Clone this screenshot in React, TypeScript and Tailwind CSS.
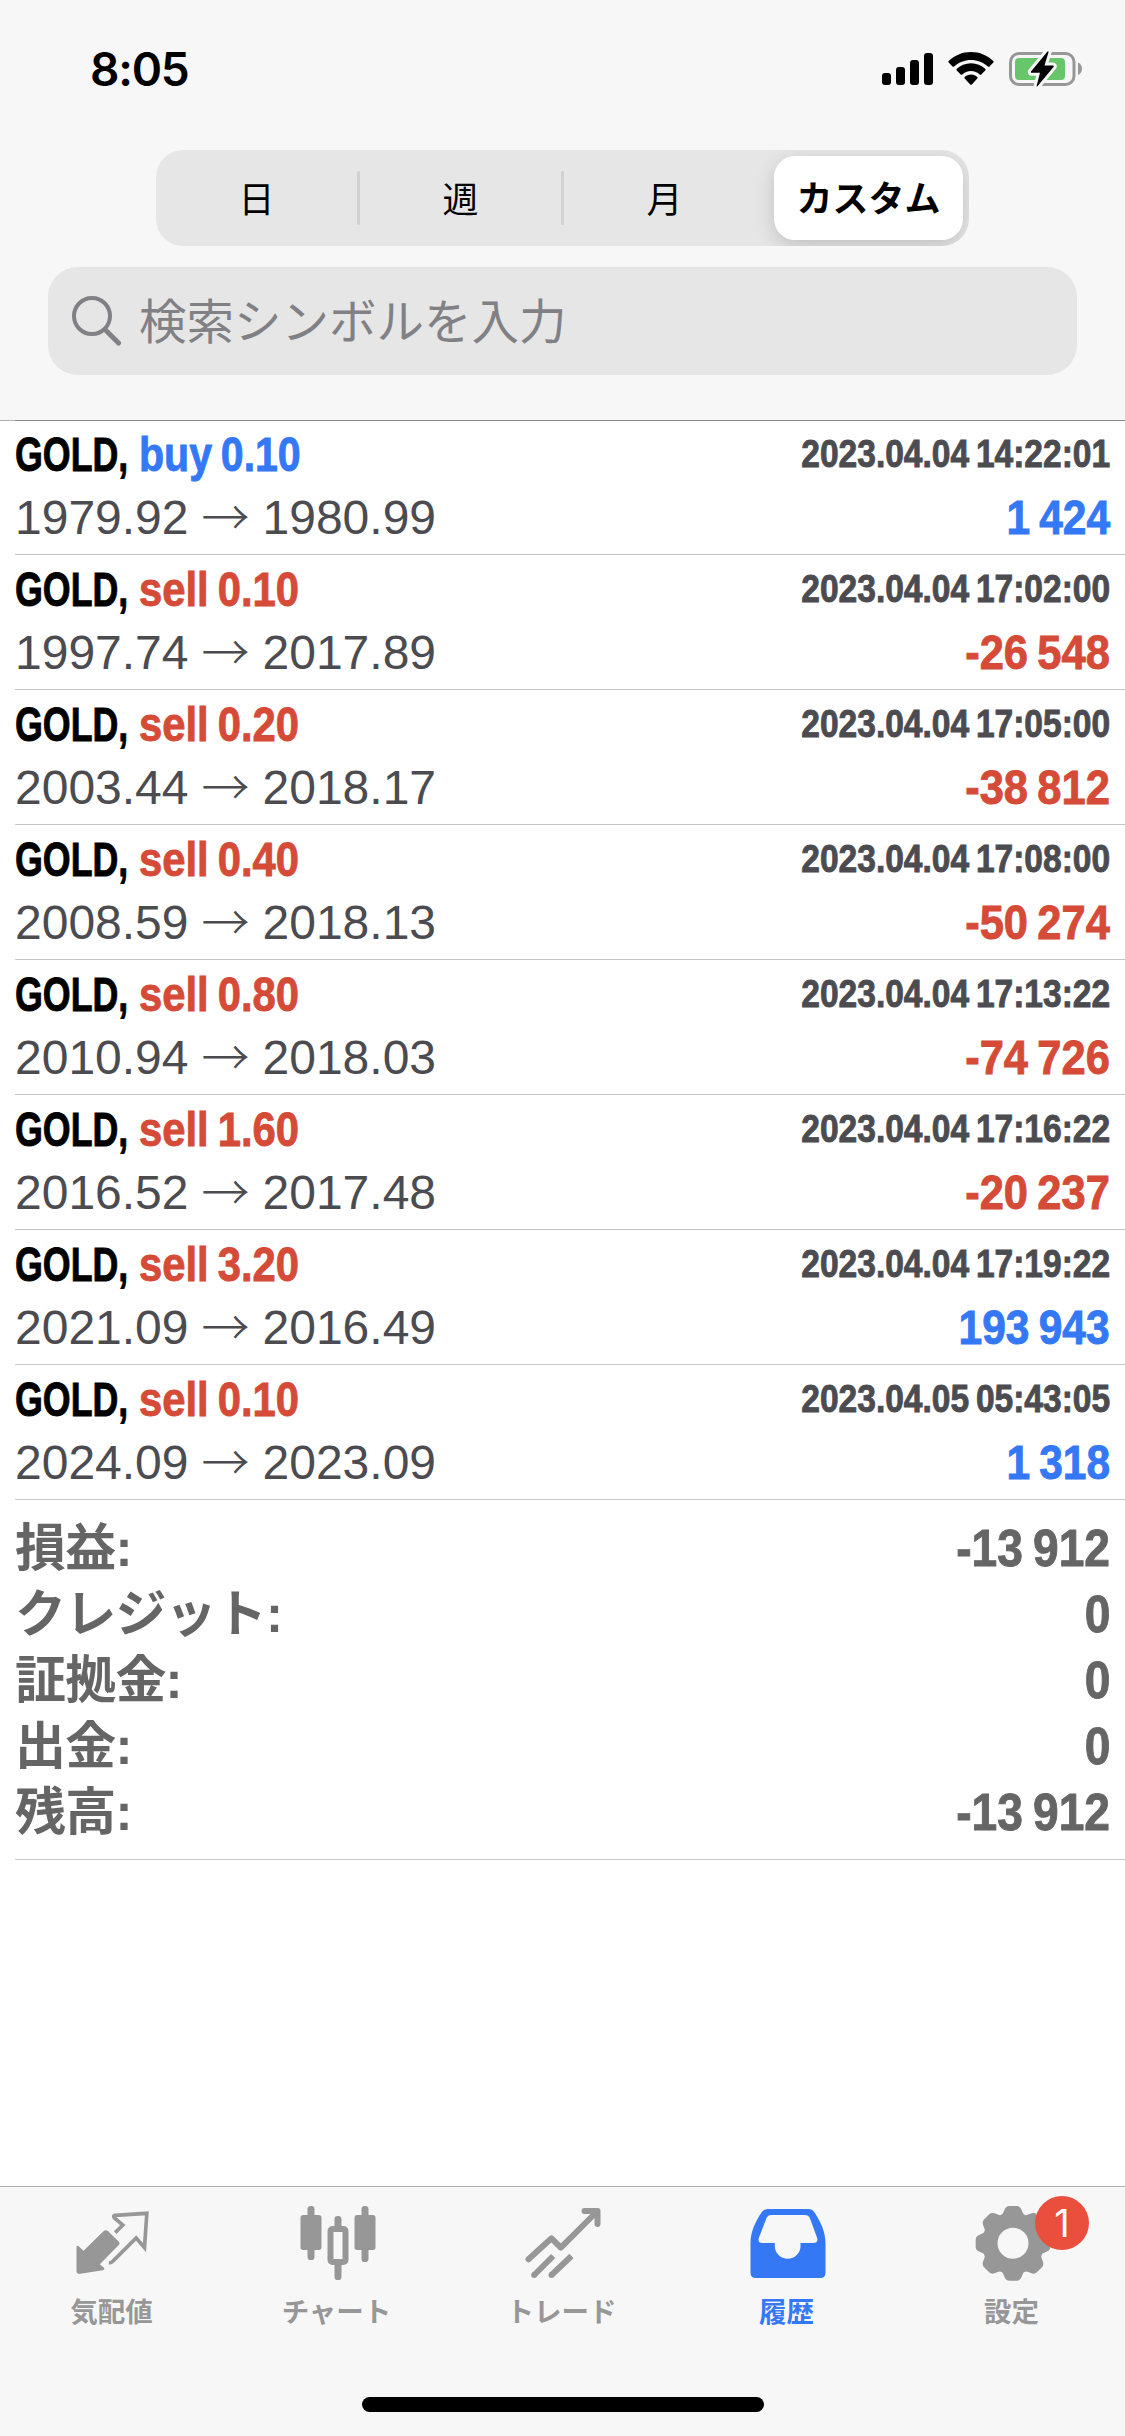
import React from 'react';

interface Deal {
  side: 'buy' | 'sell';
  volume: string;
  open: string;
  close: string;
  time: string;
  profit: string;
}

const DEALS: Deal[] = [
  { side: 'buy', volume: '0.10', open: '1979.92', close: '1980.99', time: '2023.04.04 14:22:01', profit: '1 424' },
  { side: 'sell', volume: '0.10', open: '1997.74', close: '2017.89', time: '2023.04.04 17:02:00', profit: '-26 548' },
  { side: 'sell', volume: '0.20', open: '2003.44', close: '2018.17', time: '2023.04.04 17:05:00', profit: '-38 812' },
  { side: 'sell', volume: '0.40', open: '2008.59', close: '2018.13', time: '2023.04.04 17:08:00', profit: '-50 274' },
  { side: 'sell', volume: '0.80', open: '2010.94', close: '2018.03', time: '2023.04.04 17:13:22', profit: '-74 726' },
  { side: 'sell', volume: '1.60', open: '2016.52', close: '2017.48', time: '2023.04.04 17:16:22', profit: '-20 237' },
  { side: 'sell', volume: '3.20', open: '2021.09', close: '2016.49', time: '2023.04.04 17:19:22', profit: '193 943' },
  { side: 'sell', volume: '0.10', open: '2024.09', close: '2023.09', time: '2023.04.05 05:43:05', profit: '1 318' },
];

const SUMMARY = [
  { label: '損益:', value: '-13 912' },
  { label: 'クレジット:', value: '0' },
  { label: '証拠金:', value: '0' },
  { label: '出金:', value: '0' },
  { label: '残高:', value: '-13 912' },
];

const PERIODS = ['日', '週', '月'];

// Condensed bold: the plain bold squeezed sideways, with a thin stroke to keep the stems heavy
const CONDENSED =
  "font-['Liberation_Sans',sans-serif] font-bold whitespace-pre [word-spacing:-3px] [-webkit-text-stroke:0.9px_currentColor]";

function StatusBar() {
  return (
    <div className="flex h-[150px] items-start justify-between pl-[90px] pr-[42px] text-black">
      <span className="mt-[41px] font-['Inter',sans-serif] text-[46px] leading-[56px] font-semibold tracking-[-1.2px]">
        8:05
      </span>
      <svg className="mt-[50px] h-[38px] w-[201px]" viewBox="882 50 201 38">
        <rect x="882" y="73" width="9" height="12" rx="3" />
        <rect x="896" y="67" width="9" height="18" rx="3" />
        <rect x="910" y="60" width="9" height="25" rx="3" />
        <rect x="924" y="53" width="9" height="32" rx="3" />
        {/* wifi */}
        <path d="M971 52c8.600 0 16.500 3.400 22.300 8.900.5.500.5 1.200 0 1.700l-3.800 3.800c-.5.500-1.200.5-1.700 0-4.500-4.200-10.400-6.500-16.800-6.500s-12.300 2.300-16.800 6.500c-.5.500-1.200.5-1.700 0l-3.800-3.800c-.5-.5-.5-1.200 0-1.700 5.800-5.500 13.700-8.900 22.300-8.900z" />
        <path d="M971 63.200c5.500 0 10.500 2.100 14.200 5.600.5.500.5 1.200 0 1.700l-3.900 3.900c-.4.400-1.100.4-1.600 0-2.300-2.100-5.300-3.400-8.700-3.400s-6.400 1.300-8.700 3.400c-.5.400-1.200.4-1.600 0l-3.900-3.900c-.5-.5-.5-1.200 0-1.700 3.700-3.500 8.700-5.600 14.200-5.600z" />
        <path d="M971 74.600c2.500 0 4.700.9 6.300 2.400.4.400.4 1 0 1.500l-5.500 6c-.4.500-1.200.5-1.600 0l-5.500-6c-.4-.5-.4-1.100 0-1.500 1.600-1.500 3.800-2.400 6.300-2.400z" />
        {/* battery */}
        <rect x="1010.500" y="53.500" width="63.500" height="31" rx="8.500" fill="none" stroke="#979797" strokeWidth="3" />
        <path d="M1078 62.500c2.600 1 4 3.600 4 6.300s-1.400 5.300-4 6.300z" fill="#979797" />
        <rect x="1015" y="58" width="50" height="22" rx="4" fill="#68c66a" />
        <path
          d="M1047.500 51.500 1031 71.500c-.5.800 0 1.300.8 1.300H1040l-3.300 12.700c-.3 1 .5 1.200 1 .5l15.800-19c.6-.8.200-1.500-.7-1.500H1044.500l4-13.300c.2-1-.5-1.200-1-.7z"
          stroke="#f7f7f7"
          strokeWidth="6"
          paintOrder="stroke"
        />
      </svg>
    </div>
  );
}

function PeriodSwitch() {
  return (
    <div className="mx-auto flex h-[96px] w-[813px] items-center overflow-hidden rounded-[27px] bg-[#e6e6e6] text-[36px] text-black">
      {PERIODS.map((label, i) => (
        <React.Fragment key={label}>
          {i > 0 && <span className="h-[54px] w-[3px] rounded-full bg-[#d1d1d2]" />}
          <span className="w-[201px] pb-[3px] text-center">{label}</span>
        </React.Fragment>
      ))}
      <span className="mr-[6px] ml-auto flex h-[84px] w-[189px] items-center justify-center rounded-[21px] bg-white pb-[4px] text-[36px] font-bold shadow-[0_6px_20px_rgba(0,0,0,0.16)]">
        カスタム
      </span>
    </div>
  );
}

function SearchField() {
  return (
    <div className="mx-[48px] mt-[21px] flex h-[108px] items-center rounded-[30px] bg-[#e6e6e6] pl-[24px] text-[#818185]">
      <svg className="h-[50px] w-[50px]" viewBox="0 0 50 50" fill="none" stroke="currentColor">
        <circle cx="20" cy="20" r="18" strokeWidth="4" />
        <path d="M33 33.500 46.500 47" strokeWidth="5" strokeLinecap="round" />
      </svg>
      <span className="ml-[17px] pb-[4px] text-[47.500px] leading-none">検索シンボルを入力</span>
    </div>
  );
}

function DealRow({ deal }: { deal: Deal }) {
  const sideStyle = deal.side === 'buy' ? 'scale-x-[0.855] text-[#3478f6]' : 'scale-x-[0.87] text-[#d54b37]';
  const profitStyle = deal.profit.startsWith('-')
    ? 'scale-x-[0.905] text-[#d54b37]'
    : 'scale-x-[0.885] text-[#3478f6]';

  return (
    <div className="ml-[15px] flex h-[135px] flex-col justify-end border-b border-[#c6c6c8] pr-[15px] pb-[4px] first:h-[134px]">
      <div className={`flex h-[60px] items-start ${CONDENSED}`}>
        <span className="w-[124px] origin-left scale-x-[0.745] text-[48px] leading-[61px] text-black">GOLD,</span>
        <span className={`origin-left text-[48px] leading-[61px] ${sideStyle}`}>
          {deal.side} {deal.volume}
        </span>
        <span className="ml-auto origin-right scale-x-[0.86] text-[39px] leading-[59px] text-[#4b4b50]">
          {deal.time}
        </span>
      </div>
      <div className="flex h-[66px] items-start justify-between text-[48px] leading-[67px]">
        <span className="flex items-baseline font-['Liberation_Sans',sans-serif] text-[#4b4b50]">
          {deal.open}
          <span className="relative top-px w-[74px] text-center font-['Noto_Sans_CJK_JP',sans-serif] leading-none font-light">
            →
          </span>
          {deal.close}
        </span>
        <span className={`origin-right ${CONDENSED} ${profitStyle}`}>{deal.profit}</span>
      </div>
    </div>
  );
}

function Summary() {
  return (
    <div className="ml-[15px] h-[360px] border-b border-[#c6c6c8] pt-[15px] pr-[15px] text-[#656565]">
      {SUMMARY.map(({ label, value }) => (
        <div key={label} className="flex h-[66px] items-start justify-between text-[51px] leading-[67px] font-bold">
          <span className="font-['Liberation_Sans','Noto_Sans_CJK_JP',sans-serif] tracking-[-0.8px]">{label}</span>
          <span className={`origin-right scale-x-[0.905] ${CONDENSED}`}>{value}</span>
        </div>
      ))}
    </div>
  );
}

function QuotesIcon() {
  return (
    <svg className="h-[90px] w-[90px]" viewBox="82.500 45 270 270" fill="currentColor">
      <path d="M108 203q0-9 8-3l13 12 60-58q7-7 14 0l32 31q5 5 0 10l-57 58 11 9q6 7-2 9l-67 10q-12 2-12-9z" />
      <path
        d="M224 158 247 135 221 113Q217 107 224 106L319 100 312 203 287 174 216 245Q211 249 205 249"
        fill="none"
        stroke="currentColor"
        strokeWidth="11"
      />
    </svg>
  );
}

function ChartIcon() {
  return (
    <svg className="h-[90px] w-[90px]" viewBox="757.500 45 270 270" fill="currentColor">
      <rect x="780" y="105" width="63" height="105" rx="8" />
      <rect x="801" y="78" width="21" height="162" rx="10" />
      <rect x="942" y="105" width="63" height="105" rx="8" />
      <rect x="963" y="78" width="21" height="168" rx="10" />
      <rect x="882" y="108" width="21" height="45" rx="10" />
      <rect x="882" y="240" width="21" height="60" rx="10" />
      <rect x="870" y="147" width="45" height="99" rx="6" fill="none" stroke="currentColor" strokeWidth="18" />
    </svg>
  );
}

function TradeIcon() {
  return (
    <svg className="h-[90px] w-[90px]" viewBox="112.500 45 270 270" fill="none" stroke="currentColor" strokeWidth="18">
      <path d="M144 238 213 175 241 203 348 96" strokeLinecap="round" strokeLinejoin="round" />
      <path d="M312 93H351V132" strokeLinecap="round" strokeLinejoin="round" />
      <path d="M161 285 218 228M213 285 273 228" />
      <circle cx="161" cy="285" r="9" fill="currentColor" stroke="none" />
      <circle cx="213" cy="285" r="9" fill="currentColor" stroke="none" />
    </svg>
  );
}

function HistoryIcon() {
  return (
    <svg className="h-[90px] w-[90px]" viewBox="787.500 45 270 270" fill="currentColor">
      <path
        fillRule="evenodd"
        d="M862 87H984Q995 87 1001 96C1020 124 1035 155 1035 190V278Q1035 294 1019 294H826Q810 294 810 278V190C810 155 825 124 844 96Q850 87 862 87ZM873 105Q862 105 858 114L835 174Q831 189 845 189H883V198A38 38 0 0 0 960 198V189H998Q1014 189 1010 174L988 114Q984 105 973 105Z"
      />
    </svg>
  );
}

const GEAR_TEETH = [0, 45, 90, 135, 180, 225, 270, 315];

function SettingsIcon() {
  return (
    <svg className="h-[90px] w-[90px]" viewBox="-135 -145 270 270" fill="currentColor">
      <circle r="69" fill="none" stroke="currentColor" strokeWidth="45" />
      {GEAR_TEETH.map((angle) => (
        <path
          key={angle}
          transform={`rotate(${angle})`}
          d="M-37-84Q-30-87-27-97Q-22-112-11-112H11Q22-112 27-97Q30-87 37-84Z"
        />
      ))}
    </svg>
  );
}

const TABS = [
  { label: '気配値', Icon: QuotesIcon },
  { label: 'チャート', Icon: ChartIcon },
  { label: 'トレード', Icon: TradeIcon },
  { label: '履歴', Icon: HistoryIcon, active: true },
  { label: '設定', Icon: SettingsIcon, badge: 1 },
];

function TabBar() {
  return (
    <nav className="flex h-[250px] flex-col border-t border-[#b2b2b2] bg-[#f7f7f7]">
      <div className="grid grid-cols-5 pt-[8px]">
        {TABS.map(({ label, Icon, active, badge }) => (
          <div
            key={label}
            className={`relative flex flex-col items-center ${active ? 'text-[#3478f6]' : 'text-[#979797]'}`}
          >
            <Icon />
            <span className="mt-[11px] pr-[2px] text-[27.500px] leading-[28px] font-bold">{label}</span>
            {badge && (
              <span className="absolute top-[1px] left-[135px] flex h-[54px] w-[54px] items-center justify-center rounded-full bg-[#ea4e3d] font-['Inter',sans-serif] text-[38px] leading-none text-white">
                {badge}
              </span>
            )}
          </div>
        ))}
      </div>
      <div className="mx-auto mt-auto mb-[24px] h-[15px] w-[402px] rounded-full bg-black" />
    </nav>
  );
}

export default function App() {
  return (
    <div className="flex h-[2436px] w-[1125px] flex-col overflow-hidden bg-white font-['Noto_Sans_CJK_JP',sans-serif]">
      <header className="h-[420px] bg-[#f7f7f7]">
        <StatusBar />
        <PeriodSwitch />
        <SearchField />
      </header>
      <div className="flex h-px">
        <span className="w-[15px] bg-[#b2b2b2]" />
        <span className="flex-1 bg-[#88888a]" />
      </div>
      <main className="flex-1">
        <div>
          {DEALS.map((deal) => (
            <DealRow key={deal.time} deal={deal} />
          ))}
        </div>
        <Summary />
      </main>
      <TabBar />
    </div>
  );
}
